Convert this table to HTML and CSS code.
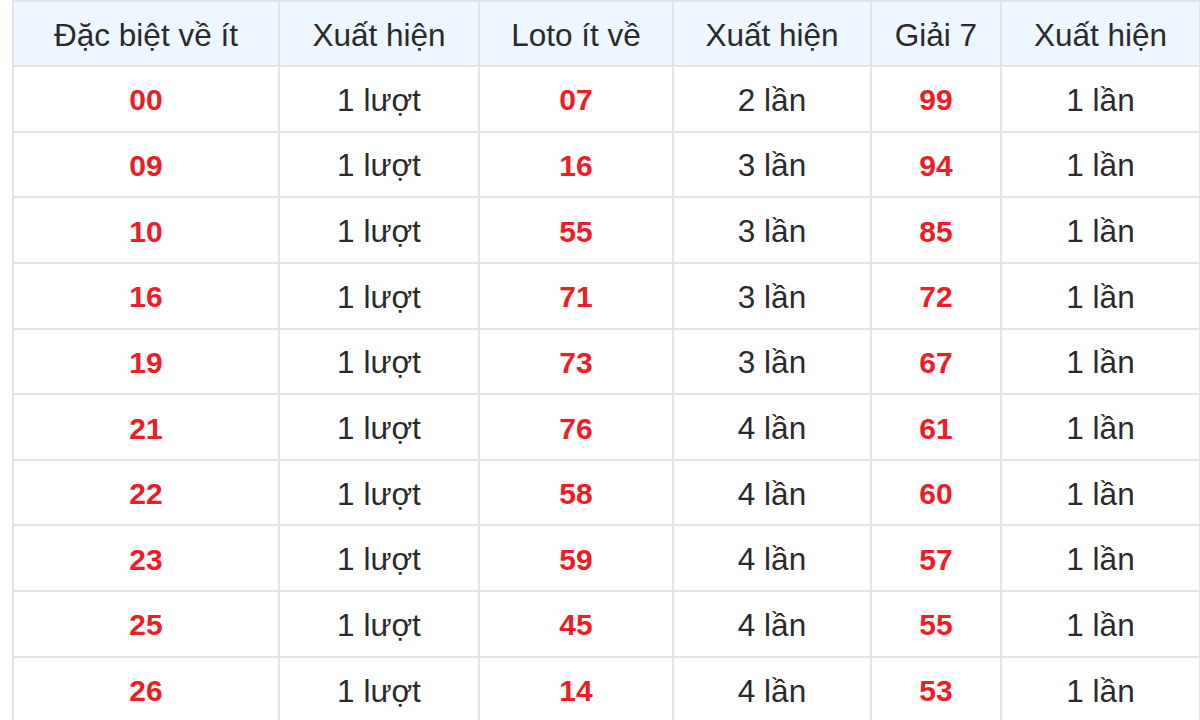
FILE: index.html
```html
<!DOCTYPE html>
<html lang="vi">
<head>
<meta charset="utf-8">
<title>Thống kê</title>
<link rel="stylesheet" href="styles.css">
</head>
<body>
<div class="wrap">
<table class="stats">
<colgroup>
<col class="c1"><col class="c2"><col class="c3"><col class="c4"><col class="c5"><col class="c6">
</colgroup>
<thead>
<tr><th>Đặc biệt về ít</th><th>Xuất hiện</th><th>Loto ít về</th><th>Xuất hiện</th><th>Giải 7</th><th>Xuất hiện</th></tr>
</thead>
<tbody>
<tr><td class="num">00</td><td>1 lượt</td><td class="num">07</td><td>2 lần</td><td class="num">99</td><td>1 lần</td></tr>
<tr><td class="num">09</td><td>1 lượt</td><td class="num">16</td><td>3 lần</td><td class="num">94</td><td>1 lần</td></tr>
<tr><td class="num">10</td><td>1 lượt</td><td class="num">55</td><td>3 lần</td><td class="num">85</td><td>1 lần</td></tr>
<tr><td class="num">16</td><td>1 lượt</td><td class="num">71</td><td>3 lần</td><td class="num">72</td><td>1 lần</td></tr>
<tr><td class="num">19</td><td>1 lượt</td><td class="num">73</td><td>3 lần</td><td class="num">67</td><td>1 lần</td></tr>
<tr><td class="num">21</td><td>1 lượt</td><td class="num">76</td><td>4 lần</td><td class="num">61</td><td>1 lần</td></tr>
<tr><td class="num">22</td><td>1 lượt</td><td class="num">58</td><td>4 lần</td><td class="num">60</td><td>1 lần</td></tr>
<tr><td class="num">23</td><td>1 lượt</td><td class="num">59</td><td>4 lần</td><td class="num">57</td><td>1 lần</td></tr>
<tr><td class="num">25</td><td>1 lượt</td><td class="num">45</td><td>4 lần</td><td class="num">55</td><td>1 lần</td></tr>
<tr><td class="num">26</td><td>1 lượt</td><td class="num">14</td><td>4 lần</td><td class="num">53</td><td>1 lần</td></tr>
</tbody>
</table>
</div>
</body>
</html>
```
FILE: styles.css
```css
html, body {
  margin: 0;
  padding: 0;
  background: #ffffff;
}
.wrap {
  padding: 0 0 0 12px;
}
.stats {
  width: 1187px;
  table-layout: fixed;
  border-collapse: collapse;
  font-family: "Liberation Sans", Arial, sans-serif;
  color: #2a2a2a;
}
.c1 { width: 266px; }
.c2 { width: 200px; }
.c3 { width: 194px; }
.c4 { width: 198px; }
.c5 { width: 130px; }
.c6 { width: 199px; }
.stats th, .stats td {
  border: 2px solid #e2e4e8;
  text-align: center;
  vertical-align: middle;
  padding: 3px 0 0 0;
}
.stats th {
  height: 60px;
  background: #eef6ff;
  font-weight: normal;
  font-size: 31.5px;
}
.stats td {
  height: 60.65px;
  font-size: 31.5px;
}
.stats td.num {
  color: #ee1c25;
  font-weight: bold;
  font-size: 30px;
}
```
